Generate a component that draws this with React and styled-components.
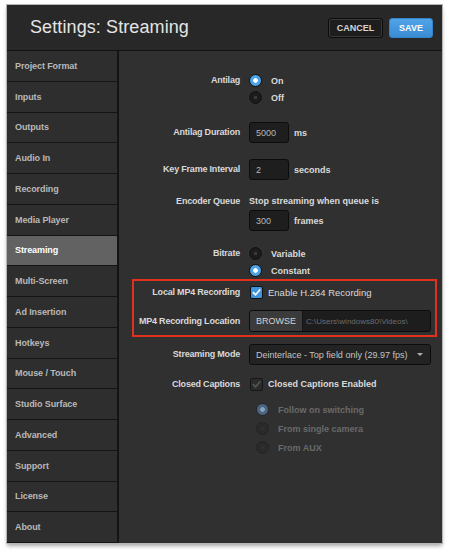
import React from 'react';
import styled, { createGlobalStyle, css } from 'styled-components';

const GlobalStyle = createGlobalStyle`
  html, body {
    margin: 0;
    padding: 0;
    background: #ffffff;
  }
  body {
    font-family: "Liberation Sans", Arial, sans-serif;
  }
  * {
    box-sizing: border-box;
  }
`;

const Page = styled.div`
  width: 452px;
  height: 552px;
  padding: 5px 10px 0 7px;
  background: #ffffff;
`;

const Window = styled.div`
  width: 435px;
  height: 538px;
  display: flex;
  flex-direction: column;
  background: #282828;
  box-shadow: 0 0 0 1px #b5b5b5, 0 3px 4px rgba(0, 0, 0, 0.35);
`;

const Header = styled.header`
  height: 45px;
  flex: none;
  display: flex;
  align-items: center;
  justify-content: space-between;
  padding: 0 9px 0 23px;
  background: #282828;
`;

const Title = styled.h1`
  margin: 0;
  font-size: 18px;
  font-weight: 400;
  color: #e4e4e4;
  letter-spacing: 0.1px;
`;

const Actions = styled.div`
  display: flex;
  gap: 6px;
`;

const HeaderButton = styled.button`
  height: 20px;
  padding: 0;
  font-family: "Liberation Sans", Arial, sans-serif;
  font-size: 9px;
  font-weight: 700;
  border-radius: 3px;
  cursor: pointer;
  ${({ $primary }) =>
    $primary
      ? css`
          width: 44px;
          color: #ffffff;
          background: linear-gradient(#4fa3e6, #3a8cd4);
          border: 1px solid #3582c6;
        `
      : css`
          width: 55px;
          color: #d6d6d6;
          background: #1d1d1d;
          border: 1px solid #0b0b0b;
          box-shadow: inset 0 0 0 1px #3a3a3a;
        `}
`;

const Body = styled.div`
  flex: 1;
  display: flex;
  border-top: 1px solid #121212;
  min-height: 0;
`;

const Sidebar = styled.nav`
  width: 112px;
  flex: none;
  display: flex;
  flex-direction: column;
  border-right: 2px solid #141414;
  background: #2e2e2e;
`;

const NavItem = styled.div`
  flex: 1;
  display: flex;
  align-items: center;
  padding-left: 8px;
  font-size: 9px;
  font-weight: 700;
  letter-spacing: -0.1px;
  color: ${({ $active }) => ($active ? '#ffffff' : '#b9b9b9')};
  background: ${({ $active }) => ($active ? '#626262' : '#2e2e2e')};
  border-bottom: 1px solid #141414;
`;

const Main = styled.main`
  flex: 1;
  background: #303030;
  padding-top: 21px;
  display: flex;
  flex-direction: column;
`;

const Row = styled.div`
  display: flex;
  align-items: flex-start;
  margin-top: ${({ $gap }) => $gap || 0}px;
`;

const Label = styled.div`
  width: 121px;
  flex: none;
  text-align: right;
  font-size: 9px;
  font-weight: 700;
  letter-spacing: -0.2px;
  color: #d9d9d9;
  line-height: ${({ $lh }) => $lh || 18}px;
  white-space: nowrap;
`;

const Control = styled.div`
  margin-left: ${({ $indent }) => 9 + ($indent || 0)}px;
  display: flex;
  flex-direction: column;
`;

const Inline = styled.div`
  display: flex;
  align-items: center;
  gap: ${({ $gap }) => $gap ?? 5}px;
  height: ${({ $h }) => ($h ? `${$h}px` : 'auto')};
  margin-top: ${({ $top }) => $top || 0}px;
`;

const Text = styled.span`
  font-size: ${({ $size }) => $size || 9}px;
  font-weight: ${({ $regular }) => ($regular ? 400 : 700)};
  color: ${({ $dim }) => ($dim ? '#6a6a6a' : '#dadada')};
  line-height: ${({ $lh }) => ($lh ? `${$lh}px` : 'normal')};
  white-space: nowrap;
`;

const Option = styled.div`
  height: ${({ $h }) => $h || 17}px;
  display: flex;
  align-items: center;
  gap: 9px;
`;

const Radio = styled.span`
  width: 13px;
  height: 13px;
  flex: none;
  border-radius: 50%;
  ${({ $checked, $disabled }) => {
    if ($checked && $disabled)
      return css`
        background: radial-gradient(circle, #8aa3bb 0 2px, #4a6581 2.6px);
        border: 1px solid #262626;
      `;
    if ($checked)
      return css`
        background: radial-gradient(circle, #ffffff 0 2px, #4ba2e6 2.6px);
        border: 1px solid #101010;
      `;
    if ($disabled)
      return css`
        background: radial-gradient(circle, #2f2f2f 0 1.5px, #2a2a2a 2px);
        border: 1px solid #232323;
      `;
    return css`
      background: radial-gradient(circle, #3a3a3a 0 1.5px, #1c1c1c 2px);
      border: 1px solid #0e0e0e;
      box-shadow: 0 0 0 0.5px #3c3c3c;
    `;
  }}
`;

const Checkbox = styled.span`
  width: 13px;
  height: 13px;
  flex: none;
  display: flex;
  align-items: center;
  justify-content: center;
  border-radius: 2px;
  margin-left: 1px;
  background: ${({ $disabled }) => ($disabled ? '#2b2b2b' : '#3f93da')};
  border: 1px solid ${({ $disabled }) => ($disabled ? '#161616' : '#0f0f0f')};
`;

const Field = styled.div`
  height: 21px;
  width: ${({ $w }) => $w || 40}px;
  display: flex;
  align-items: center;
  padding-left: 6px;
  background: #1e1e1e;
  border: 1px solid #0c0c0c;
  border-radius: 3px;
  font-size: 9px;
  color: #b8b8b8;
`;

const Highlight = styled.div`
  margin: 0 5px 0 13px;
  padding: 2px 0 3px;
  border: 2px solid #e1321f;

  ${Label} {
    width: 106px;
  }
`;

const BrowseGroup = styled.div`
  width: 182px;
  height: 22px;
  display: flex;
  align-items: stretch;
  background: #1d1d1d;
  border: 1px solid #0c0c0c;
  border-radius: 3px;
  overflow: hidden;
`;

const BrowseButton = styled.div`
  width: 53px;
  flex: none;
  display: flex;
  align-items: center;
  justify-content: center;
  background: #3b3b3b;
  border-right: 1px solid #151515;
  font-size: 9px;
  color: #d4d4d4;
`;

const Path = styled.div`
  display: flex;
  align-items: center;
  padding-left: 3px;
  font-size: 8px;
  color: #6c6c6c;
  white-space: nowrap;
`;

const Select = styled.div`
  width: 182px;
  height: 21px;
  display: flex;
  align-items: center;
  justify-content: space-between;
  padding: 0 7px 0 6px;
  background: #232323;
  border: 1px solid #0c0c0c;
  border-radius: 3px;
  font-size: 9px;
  color: #c4c4c4;
`;

const Caret = styled.span`
  width: 0;
  height: 0;
  border-left: 3px solid transparent;
  border-right: 3px solid transparent;
  border-top: 3px solid #b0b0b0;
`;

const Check = ({ color }) => (
  <svg width="9" height="9" viewBox="0 0 10 10">
    <path d="M1.5 5.2 L4 7.6 L8.6 2.2" fill="none" stroke={color} strokeWidth="1.8" strokeLinecap="round" strokeLinejoin="round" />
  </svg>
);

const navItems = [
  'Project Format',
  'Inputs',
  'Outputs',
  'Audio In',
  'Recording',
  'Media Player',
  'Streaming',
  'Multi-Screen',
  'Ad Insertion',
  'Hotkeys',
  'Mouse / Touch',
  'Studio Surface',
  'Advanced',
  'Support',
  'License',
  'About',
];

const App = () => {
  return (
    <>
      <GlobalStyle />
      <Page>
        <Window>
          <Header>
            <Title>Settings: Streaming</Title>
            <Actions>
              <HeaderButton>CANCEL</HeaderButton>
              <HeaderButton $primary>SAVE</HeaderButton>
            </Actions>
          </Header>
          <Body>
            <Sidebar>
              {navItems.map((item) => (
                <NavItem key={item} $active={item === 'Streaming'}>
                  {item}
                </NavItem>
              ))}
            </Sidebar>
            <Main>
              <Row>
                <Label $lh={17}>Antilag</Label>
                <Control>
                  <Option>
                    <Radio $checked />
                    <Text>On</Text>
                  </Option>
                  <Option>
                    <Radio />
                    <Text>Off</Text>
                  </Option>
                </Control>
              </Row>

              <Row $gap={16}>
                <Label $lh={21}>Antilag Duration</Label>
                <Control>
                  <Inline>
                    <Field>5000</Field>
                    <Text>ms</Text>
                  </Inline>
                </Control>
              </Row>

              <Row $gap={16}>
                <Label $lh={21}>Key Frame Interval</Label>
                <Control>
                  <Inline>
                    <Field>2</Field>
                    <Text>seconds</Text>
                  </Inline>
                </Control>
              </Row>

              <Row $gap={14}>
                <Label $lh={14}>Encoder Queue</Label>
                <Control>
                  <Text $lh={14}>Stop streaming when queue is</Text>
                  <Inline $top={2}>
                    <Field>300</Field>
                    <Text>frames</Text>
                  </Inline>
                </Control>
              </Row>

              <Row $gap={14}>
                <Label $lh={17}>Bitrate</Label>
                <Control>
                  <Option>
                    <Radio />
                    <Text>Variable</Text>
                  </Option>
                  <Option>
                    <Radio $checked />
                    <Text>Constant</Text>
                  </Option>
                </Control>
              </Row>

              <Highlight>
                <Row>
                  <Label>Local MP4 Recording</Label>
                  <Control>
                    <Inline $gap={5} $h={18}>
                      <Checkbox>
                        <Check color="#ffffff" />
                      </Checkbox>
                      <Text $regular $size={9.5}>Enable H.264 Recording</Text>
                    </Inline>
                  </Control>
                </Row>
                <Row $gap={9}>
                  <Label $lh={22}>MP4 Recording Location</Label>
                  <Control>
                    <BrowseGroup>
                      <BrowseButton>BROWSE</BrowseButton>
                      <Path>C:\Users\windows80\Videos\</Path>
                    </BrowseGroup>
                  </Control>
                </Row>
              </Highlight>

              <Row $gap={7}>
                <Label $lh={21}>Streaming Mode</Label>
                <Control>
                  <Select>
                    <span>Deinterlace - Top field only (29.97 fps)</span>
                    <Caret />
                  </Select>
                </Control>
              </Row>

              <Row $gap={10}>
                <Label>Closed Captions</Label>
                <Control>
                  <Inline $gap={5} $h={18}>
                    <Checkbox $disabled>
                      <Check color="#565656" />
                    </Checkbox>
                    <Text>Closed Captions Enabled</Text>
                  </Inline>
                </Control>
              </Row>

              <Row $gap={7}>
                <Label />
                <Control $indent={7}>
                  <Option $h={19}>
                    <Radio $checked $disabled />
                    <Text $dim>Follow on switching</Text>
                  </Option>
                  <Option $h={19}>
                    <Radio $disabled />
                    <Text $dim>From single camera</Text>
                  </Option>
                  <Option $h={19}>
                    <Radio $disabled />
                    <Text $dim>From AUX</Text>
                  </Option>
                </Control>
              </Row>
            </Main>
          </Body>
        </Window>
      </Page>
    </>
  );
};

export default App;
